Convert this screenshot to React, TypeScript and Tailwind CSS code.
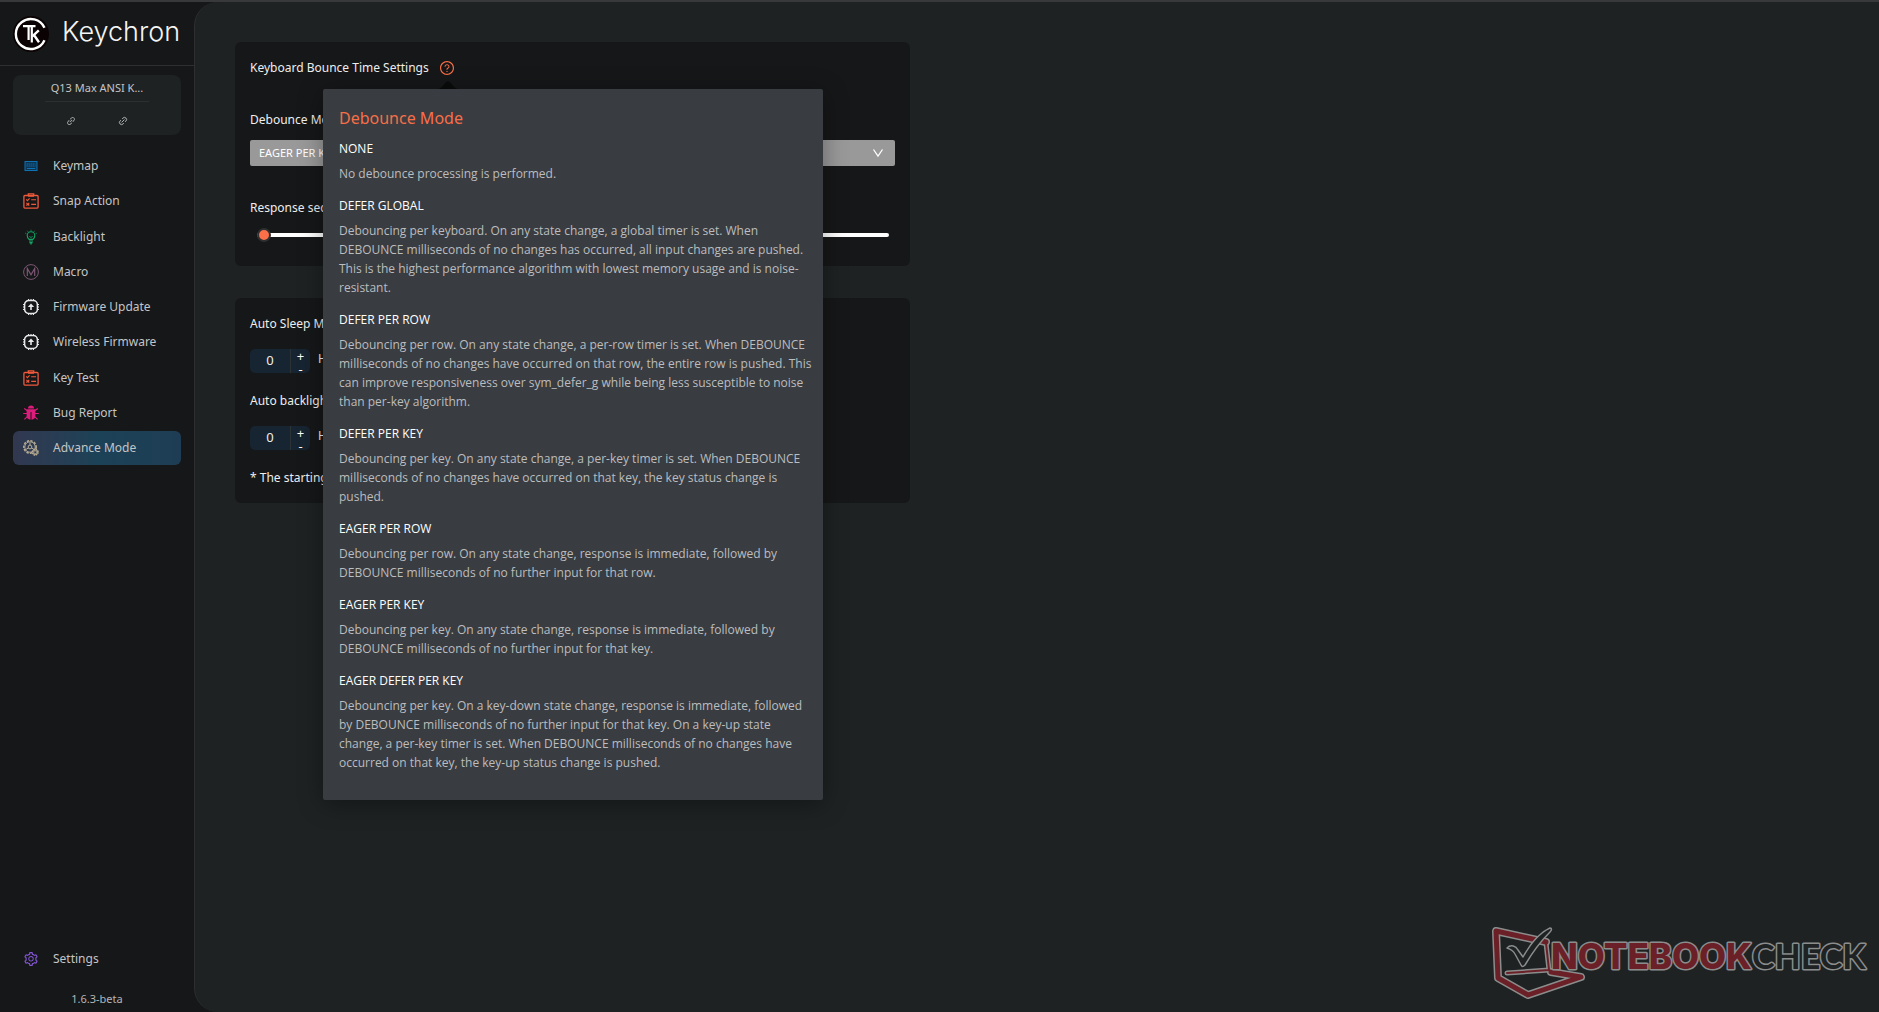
import type { ReactNode } from 'react';
import { LuLink2 } from 'react-icons/lu';
import { AiOutlineLink, AiOutlineQuestionCircle, AiOutlineSetting } from 'react-icons/ai';

const BODY_FONT_CLASS = "font-['Open_Sans','Noto_Sans',sans-serif]";
const LABEL_FONT_CLASS = "font-['Noto_Sans','Open_Sans',sans-serif]";

const KeymapIcon = () => (
    <svg width="16" height="16" viewBox="0 0 16 16" fill="none">
        <rect x="2" y="3.5" width="12" height="9" fill="#0c3552" stroke="#0e72b5" />
        <path d="M3.5 6h9M3.5 8h9" stroke="#0e72b5" strokeDasharray="1.4 0.6" />
        <path d="M4 10.5h8" stroke="#0e72b5" />
    </svg>
);

const ClipboardIcon = () => (
    <svg width="16" height="16" viewBox="0 0 16 16" fill="none" stroke="#f0593b">
        <rect x="0.9" y="2.5" width="14.2" height="12.6" rx="1" strokeWidth="1.3" />
        <path d="M5.3 2.4V0.9h5.4v1.5" strokeWidth="1.3" />
        <path d="M5 3.2h6M3.2 6.4l1.2 1.2L6.6 5.4M8.2 6.8H13M3.4 9.8l2.8 2.8M6.2 9.8l-2.8 2.8M3.6 11.2h2.6M8.2 11.4H13" strokeWidth="1.1" />
    </svg>
);

const BulbIcon = () => (
    <svg width="16" height="16" viewBox="0 0 16 16" fill="none" stroke="#12a765">
        <path d="M6 10.4C4.8 9.4 4.2 8.2 4.2 6.6a3.8 3.8 0 0 1 7.6 0c0 1.6-.6 2.8-1.8 3.8z" strokeWidth="1.1" />
        <path d="M6.4 7.5c.8 1 2.4 1 3.2 0" strokeWidth="0.9" />
        <path d="M6 12h4M6.4 13.6h3.2M7.3 14.9h1.4" strokeWidth="1.2" />
        <path d="M8 .8v1M4.4 1.8l.6.9M11.6 1.8l-.6.9M2.3 4.2l1 .5M13.7 4.2l-1 .5" strokeWidth="0.9" />
    </svg>
);

const MacroIcon = () => (
    <svg width="16" height="16" viewBox="0 0 16 16" fill="none" stroke="#7d5676">
        <circle cx="8" cy="8" r="7.4" />
        <path d="M4.3 12V4.5L8 10.8l3.7-6.3V12" strokeWidth="1.2" />
    </svg>
);

const FirmwareIcon = () => (
    <svg width="16" height="16" viewBox="0 0 16 16" fill="none" stroke="#e8e9ea">
        <rect x="1.6" y="1.6" width="12.8" height="12.8" rx="4.2" strokeWidth="1.5" />
        <path d="M5.5 0v1.5M8 0v1.5M10.5 0v1.5M5.5 14.5V16M8 14.5V16M10.5 14.5V16M0 5.5h1.5M0 8h1.5M0 10.5h1.5M14.5 5.5H16M14.5 8H16M14.5 10.5H16" />
        <path d="M8 11V6" strokeWidth="1.6" />
        <path d="M8 4.4L11.2 8H4.8z" fill="#e8e9ea" stroke="none" />
    </svg>
);

const BugIcon = () => (
    <svg width="16" height="16" viewBox="0 0 16 16" fill="#dd1c7b">
        <path d="M5 3.4a3 2.9 0 0 1 6 0z" />
        <path d="M3.6 4.2h8.8v6.3a4.4 4.3 0 0 1-3.9 4.3V7h-1v7.8a4.4 4.3 0 0 1-3.9-4.3z" />
        <path d="M1.2 3.6L4 5.6M14.8 3.6L12 5.6M.2 8.5H4M15.8 8.5H12M1.4 14.4L4.3 11.6M14.6 14.4L11.7 11.6" stroke="#dd1c7b" strokeWidth="1.2" />
    </svg>
);

const GearsIcon = () => (
    <svg width="16" height="16" viewBox="0 0 16 16" fill="none" stroke="#b9ad95">
        <circle cx="7" cy="7" r="6.2" strokeWidth="1.5" strokeDasharray="2.4 1.2" />
        <circle cx="7" cy="7" r="5.2" strokeWidth="0.9" />
        <circle cx="7" cy="7" r="1.9" />
        <path d="M7 5.3V2.4M5.5 7.9L3 9.4M8.5 7.9l2.5 1.5" />
        <circle cx="12.2" cy="12.2" r="2.8" fill="#8a867c" strokeWidth="1.5" strokeDasharray="1.5 0.7" />
        <circle cx="12.2" cy="12.2" r="0.9" fill="#2b4257" stroke="none" />
    </svg>
);

const KeychronMark = () => (
    <svg width="36" height="36" viewBox="0 0 36 36" fill="none">
        <circle cx="18" cy="18" r="18" fill="#0b0203" />
        <path d="M31.5 11.8A15 15 0 1 0 31.5 24.2" stroke="#fff" strokeWidth="2.4" />
        <path d="M10 10.2h12.5M15.6 10.2V24M18.8 10.2V26.5" stroke="#fff" strokeWidth="2.2" />
        <path d="M25.8 14.3l-6.5 6M20.8 18.8l5.2 7.4" stroke="#fff" strokeWidth="2.4" />
    </svg>
);

const NAV_ITEMS: { label: string; icon: ReactNode }[] = [
    { label: 'Keymap', icon: <KeymapIcon /> },
    { label: 'Snap Action', icon: <ClipboardIcon /> },
    { label: 'Backlight', icon: <BulbIcon /> },
    { label: 'Macro', icon: <MacroIcon /> },
    { label: 'Firmware Update', icon: <FirmwareIcon /> },
    { label: 'Wireless Firmware', icon: <FirmwareIcon /> },
    { label: 'Key Test', icon: <ClipboardIcon /> },
    { label: 'Bug Report', icon: <BugIcon /> },
    { label: 'Advance Mode', icon: <GearsIcon /> },
];

const ACTIVE_ITEM = 'Advance Mode';

const DEBOUNCE_MODES = [
    { name: 'NONE', text: 'No debounce processing is performed.' },
    {
        name: 'DEFER GLOBAL',
        text: 'Debouncing per keyboard. On any state change, a global timer is set. When DEBOUNCE milliseconds of no changes has occurred, all input changes are pushed. This is the highest performance algorithm with lowest memory usage and is noise-resistant.',
    },
    {
        name: 'DEFER PER ROW',
        text: 'Debouncing per row. On any state change, a per-row timer is set. When DEBOUNCE\nmilliseconds of no changes have occurred on that row, the entire row is pushed. This\ncan improve responsiveness over sym_defer_g while being less susceptible to noise\nthan per-key algorithm.',
    },
    {
        name: 'DEFER PER KEY',
        text: 'Debouncing per key. On any state change, a per-key timer is set. When DEBOUNCE milliseconds of no changes have occurred on that key, the key status change is\npushed.',
    },
    {
        name: 'EAGER PER ROW',
        text: 'Debouncing per row. On any state change, response is immediate, followed by DEBOUNCE milliseconds of no further input for that row.',
    },
    {
        name: 'EAGER PER KEY',
        text: 'Debouncing per key. On any state change, response is immediate, followed by DEBOUNCE milliseconds of no further input for that key.',
    },
    {
        name: 'EAGER DEFER PER KEY',
        text: 'Debouncing per key. On a key-down state change, response is immediate, followed\nby DEBOUNCE milliseconds of no further input for that key. On a key-up state\nchange, a per-key timer is set. When DEBOUNCE milliseconds of no changes have\noccurred on that key, the key-up status change is pushed.',
    },
];

const Sidebar = () => (
    <aside className="flex w-[194px] shrink-0 flex-col">
        <div className="flex h-16 items-center gap-[13px] border-b border-[#2d2f31] pl-[13px]">
            <KeychronMark />
            <span className="pb-1 font-['Inter',sans-serif] text-[27px] leading-8 font-light text-[#f4f4f4]">Keychron</span>
        </div>

        <div className="mx-[13px] mt-[9px] flex h-[60px] flex-col items-center rounded-lg bg-[#1e2223]">
            <span className="w-[104px] border-b border-[#2d2f31] pt-1 pb-1 text-center text-[11px] leading-[18px] text-[#c4c5c6]">
                Q13 Max ANSI K...
            </span>
            <div className="flex w-[104px] grow items-end justify-around pb-[9px] text-[#c4c5c6]">
                <button type="button" aria-label="Connect device">
                    <AiOutlineLink size={10} />
                </button>
                <button type="button" aria-label="Disconnect device">
                    <LuLink2 size={10} className="-rotate-45" />
                </button>
            </div>
        </div>

        <nav className="mx-[13px] mt-[14px] flex h-[316px] flex-col justify-between">
            {NAV_ITEMS.map(({ label, icon }) => (
                <a
                    key={label}
                    href="#"
                    className={`flex h-[34px] items-center gap-[14px] rounded-md pl-[10px] text-xs text-[#c4c5c6] ${
                        label === ACTIVE_ITEM ? 'bg-linear-to-r from-[#313850] via-[#1c4257] to-[#1e3d55]' : ''
                    }`}
                >
                    {icon}
                    {label}
                </a>
            ))}
        </nav>

        <div className="mx-[13px] mt-auto">
            <a href="#" className="flex h-[34px] items-center gap-[14px] pl-[10px] text-xs text-[#c4c5c6]">
                <AiOutlineSetting size={16} className="text-[#8457d6]" />
                Settings
            </a>
            <p className="pt-[14px] pb-1 text-center text-[11px] leading-[18px] text-[#b4b5b6]">1.6.3-beta</p>
        </div>
    </aside>
);

const DebouncePopover = () => (
    <div
        role="tooltip"
        className="absolute top-[47px] left-[88px] z-10 h-[711px] w-[500px] rounded-xs bg-[#393c41] pt-[15px] pr-1 pl-4 shadow-[0_4px_24px_rgba(0,0,0,0.35)]"
    >
        <svg width="20" height="9" viewBox="0 0 20 9" className="absolute -top-2 left-[115px]">
            <path d="M0 8C4 8 7 0.5 10 0.5S16 8 20 8z" fill="#080909" />
        </svg>
        <h2 className="text-base leading-7 text-[#f76f48]">Debounce Mode</h2>
        <dl className={`pt-[7px] text-xs leading-[19px] ${BODY_FONT_CLASS}`}>
            {DEBOUNCE_MODES.map(({ name, text }) => (
                <div key={name} className="mb-[13px]">
                    <dt className="mb-[6px] text-white">{name}</dt>
                    <dd className="whitespace-pre-line text-[#bcbdbf]">{text}</dd>
                </div>
            ))}
        </dl>
    </div>
);

const TimeInput = ({ id, label }: { id: string; label: string }) => (
    <div className="flex items-start gap-2">
        <div className="flex h-6 w-[60px] rounded-[5px] bg-[#172431]">
            <input id={id} defaultValue="0" aria-label={label} className="w-10 bg-transparent text-center text-[13px] text-[#eeeeee]" />
            <div className="flex w-5 flex-col border-l border-[#2c3336] text-[13px] leading-3 text-white">
                <button type="button" aria-label="Increase" className="h-[14px]">+</button>
                <button type="button" aria-label="Decrease" className="h-[10px]">-</button>
            </div>
        </div>
        <label htmlFor={id} className="leading-5">Hours</label>
    </div>
);

const NotebookcheckMark = () => (
    <svg width="390" height="84" viewBox="0 0 390 84" className="absolute right-0 bottom-1 opacity-75" role="img" aria-label="Notebookcheck">
        <g strokeLinejoin="round" strokeLinecap="round" fill="none">
            <path d="M57 18L7 7L9 54L39 71L92 53L62 48" stroke="#b0b0b0" strokeWidth="8" />
            <path d="M57 19L60 46L18 49" stroke="#b0b0b0" strokeWidth="5" />
            <path d="M57 18L7 7L9 54L39 71L92 53L62 48" stroke="#851f27" strokeWidth="5" />
            <path d="M57 19L60 46L18 49" stroke="#851f27" strokeWidth="2" />
            <path d="M18 24c4-4 9-2 11 2l5 7C40 22 50 9 61 4c2 0 2 2 0 4C51 18 43 29 36 41c-2 2-3 2-4 0l-6-11c-2-4-5-5-8-6z" fill="#1e2223" stroke="#b0b0b0" strokeWidth="1.5" />
        </g>
        <g strokeLinejoin="round" strokeWidth="3" stroke="#b0b0b0">
            <text x="62" y="45" fontFamily="Inter, sans-serif" fontSize="35" fontWeight="800" fill="#851f27" style={{ paintOrder: 'stroke' }}>NOTEBOOK</text>
            <text x="263" y="45" fontFamily="Lato, sans-serif" fontSize="34" fontWeight="700" fill="#1e2223" style={{ paintOrder: 'stroke' }}>CHECK</text>
        </g>
    </svg>
);

export default function App() {
    return (
        <div className={`flex min-h-screen border-t-2 border-[#38393b] bg-[#161718] text-xs text-[#eeeeee] ${LABEL_FONT_CLASS}`}>
            <Sidebar />
            <main className="relative grow rounded-l-3xl border-l border-[#2d2f31] bg-[#1e2223] pt-10 pl-10">
                <section className="relative h-56 w-[675px] rounded-md bg-[#161718] px-[15px] pt-4">
                    <h1 className="flex h-5 items-center gap-[10px]">
                        Keyboard Bounce Time Settings
                        <button type="button" aria-label="About debounce modes" className="text-[#f76f48]">
                            <AiOutlineQuestionCircle size={16} />
                        </button>
                    </h1>
                    <label htmlFor="debounce" className="mt-8 block leading-5">Debounce Mode</label>
                    <div className="mt-[10px] grid items-center">
                        <select
                            id="debounce"
                            defaultValue="EAGER PER KEY"
                            className="col-start-1 row-start-1 h-[26px] appearance-none rounded-xs bg-[#999999] px-[9px] text-[11px] text-white"
                        >
                            {DEBOUNCE_MODES.map(({ name }) => (
                                <option key={name}>{name}</option>
                            ))}
                        </select>
                        <svg width="12" height="12" viewBox="0 0 12 12" fill="none" className="pointer-events-none col-start-1 row-start-1 mr-[11px] justify-self-end">
                            <path d="M1.5 2.5L6 9l4.5-6.5" stroke="#fff" strokeWidth="1.3" />
                        </svg>
                    </div>
                    <label htmlFor="response" className="mt-8 block leading-5">Response seconds</label>
                    <input
                        id="response"
                        type="range"
                        min="0"
                        max="200"
                        defaultValue="0"
                        className="mx-[7px] mt-[10px] block h-[14px] w-[632px] appearance-none bg-transparent [&::-webkit-slider-runnable-track]:h-1 [&::-webkit-slider-runnable-track]:rounded-xs [&::-webkit-slider-runnable-track]:bg-white [&::-webkit-slider-thumb]:-mt-[5px] [&::-webkit-slider-thumb]:size-[14px] [&::-webkit-slider-thumb]:appearance-none [&::-webkit-slider-thumb]:rounded-full [&::-webkit-slider-thumb]:border-2 [&::-webkit-slider-thumb]:border-[#2d2f31] [&::-webkit-slider-thumb]:bg-[#fb7049]"
                    />
                    <DebouncePopover />
                </section>

                <section className="mt-8 h-[205px] w-[675px] rounded-md bg-[#161718] px-[15px] pt-4">
                    <h2 className="mb-[15px] leading-5">Auto Sleep Mode</h2>
                    <TimeInput id="sleep" label="Auto sleep hours" />
                    <h2 className="mt-[18px] mb-[15px] leading-5">Auto backlight off</h2>
                    <TimeInput id="backlight" label="Auto backlight hours" />
                    <p className="mt-[18px] leading-5">* The starting time</p>
                </section>

                <NotebookcheckMark />
            </main>
        </div>
    );
}
